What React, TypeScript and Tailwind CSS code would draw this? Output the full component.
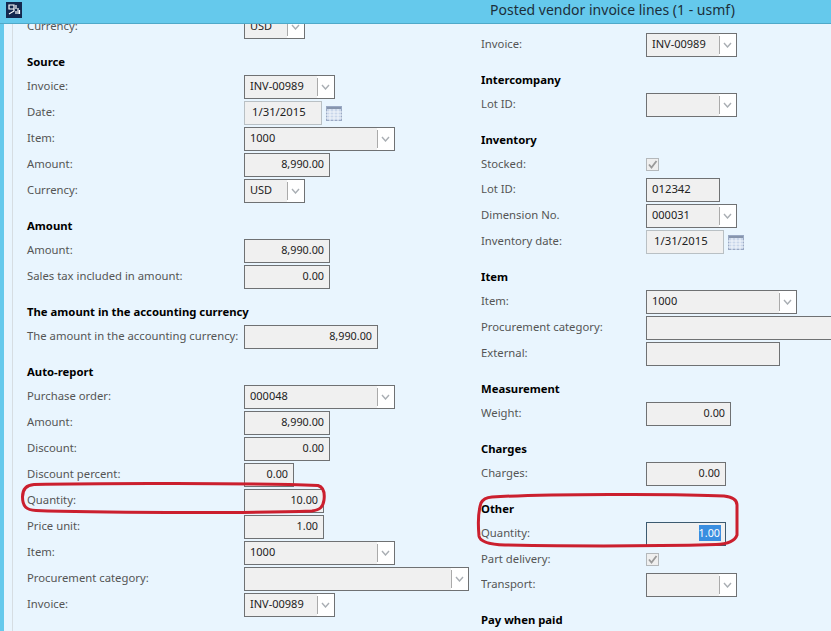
import React from 'react';

const font = "font-['Noto_Sans',sans-serif]";

function Heading({ children }: { children: React.ReactNode }) {
    return <div className="h-[34px] flex items-end pb-[5px] text-[11.3px] font-bold text-black leading-4 whitespace-nowrap">{children}</div>;
}

function Row({ label, compact, children }: { label: string; compact?: boolean; children: React.ReactNode }) {
    return (
        <div className={`flex ${compact ? 'h-[23px]' : 'h-6'} mb-0.5 items-center`}>
            <div className="w-[var(--lw)] shrink-0 pb-0.5 text-[11.3px] text-[#555] leading-4 whitespace-nowrap">{label}</div>
            {children}
        </div>
    );
}

function Input({ w, value, right, focus }: { w: string; value?: string; right?: boolean; focus?: boolean }) {
    return (
        <div className={`${w} h-6 shrink-0 border ${focus ? 'border-[#3c5a70]' : 'border-[#6f7173]'} bg-[#f0f0f0] flex items-center px-[5px] pb-0.5 text-[#222] leading-4 ${right ? 'justify-end text-[10.8px]' : 'text-[11.3px]'}`}>
            {focus ? <span className="bg-[#3a8ee0] text-white -mr-[1px] pr-px">{value}</span> : value}
        </div>
    );
}

function Combo({ w, value }: { w: string; value?: string }) {
    return (
        <div className={`${w} h-6 shrink-0 border border-[#6f7173] bg-[#f0f0f0] flex items-center text-[11px] text-[#222] leading-4`}>
            <span className="flex-1 pl-[5px] pb-0.5">{value}</span>
            <span className="w-[17px] h-full bg-white flex items-center justify-center relative">
                <span className="absolute left-0 top-[2px] bottom-[2px] w-px bg-[#aaa]" />
                <svg width="9" height="6" viewBox="0 0 9 6" fill="none" stroke="#a9aeb3" strokeWidth="1.4"><path d="M1 1l3.5 4L8 1" /></svg>
            </span>
        </div>
    );
}

function DateField({ value }: { value: string }) {
    return (
        <div className="flex items-center">
            <div className="w-[78px] h-6 border border-[#b9c0c4] bg-[#f0f0f0] flex items-center pl-[7px] pb-0.5 text-[11.3px] text-[#222] leading-4">{value}</div>
            <svg className="ml-1" width="16" height="15" viewBox="0 0 16 15">
                <rect x="0.5" y="0.5" width="15" height="14" fill="#c9d6ea" stroke="#9aa9c4" />
                <rect x="1" y="1" width="14" height="2" fill="#8795ad" />
                <path d="M0 6h16M0 9h16M0 12h16M4 3v12M8 3v12M12 3v12" stroke="#f2f6fb" strokeWidth="1" />
            </svg>
        </div>
    );
}

function Check() {
    return (
        <div className="w-[13px] h-[13px] border border-[#b4b8bb] bg-[#efefef] flex items-center justify-center">
            <svg width="11" height="11" viewBox="0 0 11 11" fill="none" stroke="#9a9a9a" strokeWidth="1.8"><path d="M2 5.5l2.5 3L9.5 2" /></svg>
        </div>
    );
}

export default function App() {
    return (
        <div className={`relative w-[831px] h-[631px] overflow-hidden bg-[#e9f5fe] ${font}`}>
            <div className="h-6 bg-[#65c9ec] border-b border-[#4fa9c9] flex items-center relative z-10">
                <div className="w-4 h-4 ml-1.5 mb-1 bg-[#14284e] flex items-center justify-center">
                    <svg width="14" height="14" viewBox="0 0 14 14" fill="none" stroke="#fff" strokeWidth="1.2">
                        <path d="M2 2h5v4H2zM2 11l5-3v-2M9 2v4M11 5v6M9 8v3M12.500 7v4" />
                    </svg>
                </div>
                <div className="ml-[468px] text-[14px] text-[#1c2f3a] leading-5 -mt-1 whitespace-nowrap">Posted vendor invoice lines (1 - usmf)</div>
            </div>

            <div className="flex h-[607px]">
                <div className="w-1 bg-[#65c9ec] shrink-0" />
                <div className="w-2 shrink-0" />
                <div className="w-px bg-[#d6dde2] shrink-0" />

                {/* left column */}
                <div className="w-[468px] shrink-0 pl-[14px] -mt-[9px] [--lw:217px]">
                    <Row label="Currency:"><Combo w="w-[61px]" value="USD" /></Row>

                    <Heading>Source</Heading>
                    <Row label="Invoice:"><Combo w="w-[91px]" value="INV-00989" /></Row>
                    <Row label="Date:"><DateField value="1/31/2015" /></Row>
                    <Row label="Item:"><Combo w="w-[151px]" value="1000" /></Row>
                    <Row label="Amount:"><Input w="w-[86px]" value="8,990.00" right /></Row>
                    <Row label="Currency:"><Combo w="w-[61px]" value="USD" /></Row>

                    <Heading>Amount</Heading>
                    <Row label="Amount:"><Input w="w-[86px]" value="8,990.00" right /></Row>
                    <Row label="Sales tax included in amount:"><Input w="w-[86px]" value="0.00" right /></Row>

                    <Heading>The amount in the accounting currency</Heading>
                    <Row label="The amount in the accounting currency:"><Input w="w-[134px]" value="8,990.00" right /></Row>

                    <Heading>Auto-report</Heading>
                    <Row label="Purchase order:"><Combo w="w-[151px]" value="000048" /></Row>
                    <Row label="Amount:"><Input w="w-[86px]" value="8,990.00" right /></Row>
                    <Row label="Discount:"><Input w="w-[86px]" value="0.00" right /></Row>
                    <Row label="Discount percent:"><Input w="w-[50px]" value="0.00" right /></Row>
                    <Row label="Quantity:"><Input w="w-[80px]" value="10.00" right /></Row>
                    <Row label="Price unit:"><Input w="w-[80px]" value="1.00" right /></Row>
                    <Row label="Item:"><Combo w="w-[151px]" value="1000" /></Row>
                    <Row label="Procurement category:"><Combo w="w-[225px]" /></Row>
                    <Row label="Invoice:"><Combo w="w-[91px]" value="INV-00989" /></Row>
                </div>

                {/* right column */}
                <div className="flex-1 min-w-0 [--lw:165px] overflow-hidden pt-[9px]">
                    <Row label="Invoice:"><Combo w="w-[91px]" value="INV-00989" /></Row>

                    <Heading>Intercompany</Heading>
                    <Row label="Lot ID:"><Combo w="w-[91px]" /></Row>

                    <Heading>Inventory</Heading>
                    <Row label="Stocked:" compact><Check /></Row>
                    <Row label="Lot ID:"><Input w="w-[74px]" value="012342" /></Row>
                    <Row label="Dimension No."><Combo w="w-[91px]" value="000031" /></Row>
                    <Row label="Inventory date:"><DateField value="1/31/2015" /></Row>

                    <Heading>Item</Heading>
                    <Row label="Item:"><Combo w="w-[151px]" value="1000" /></Row>
                    <Row label="Procurement category:"><Input w="w-[200px]" /></Row>
                    <Row label="External:"><Input w="w-[134px]" /></Row>

                    <Heading>Measurement</Heading>
                    <Row label="Weight:"><Input w="w-[85px]" value="0.00" right /></Row>

                    <Heading>Charges</Heading>
                    <Row label="Charges:"><Input w="w-[80px]" value="0.00" right /></Row>

                    <Heading>Other</Heading>
                    <Row label="Quantity:"><Input w="w-[80px]" value="1.00" right focus /></Row>
                    <Row label="Part delivery:" compact><Check /></Row>
                    <Row label="Transport:"><Combo w="w-[91px]" /></Row>

                    <Heading>Pay when paid</Heading>
                </div>
            </div>

            {/* red marker rings */}
            <svg className="absolute left-0 top-0 pointer-events-none z-20" width="831" height="631" fill="none" stroke="#cb1f2e" strokeWidth="3">
                <path d="M34 484.500C100 483 250 483 318 485.500C323 487 325 492 324 500C323 507 320 510 312 511C240 513.500 90 512.500 36 510.500C26 510 22.500 506 22.500 497C22.500 489 26 485 34 484.500Z" />
                <path d="M492 497C540 494 680 493.500 724 496C733 497 737 500 737 505V535C735 541 728 544 716 544.500C660 546 560 546 505 545C490 544.500 480 542 479 536C478 525 478 512 481 503C483 499 486 497.500 492 497Z" />
            </svg>
        </div>
    );
}
